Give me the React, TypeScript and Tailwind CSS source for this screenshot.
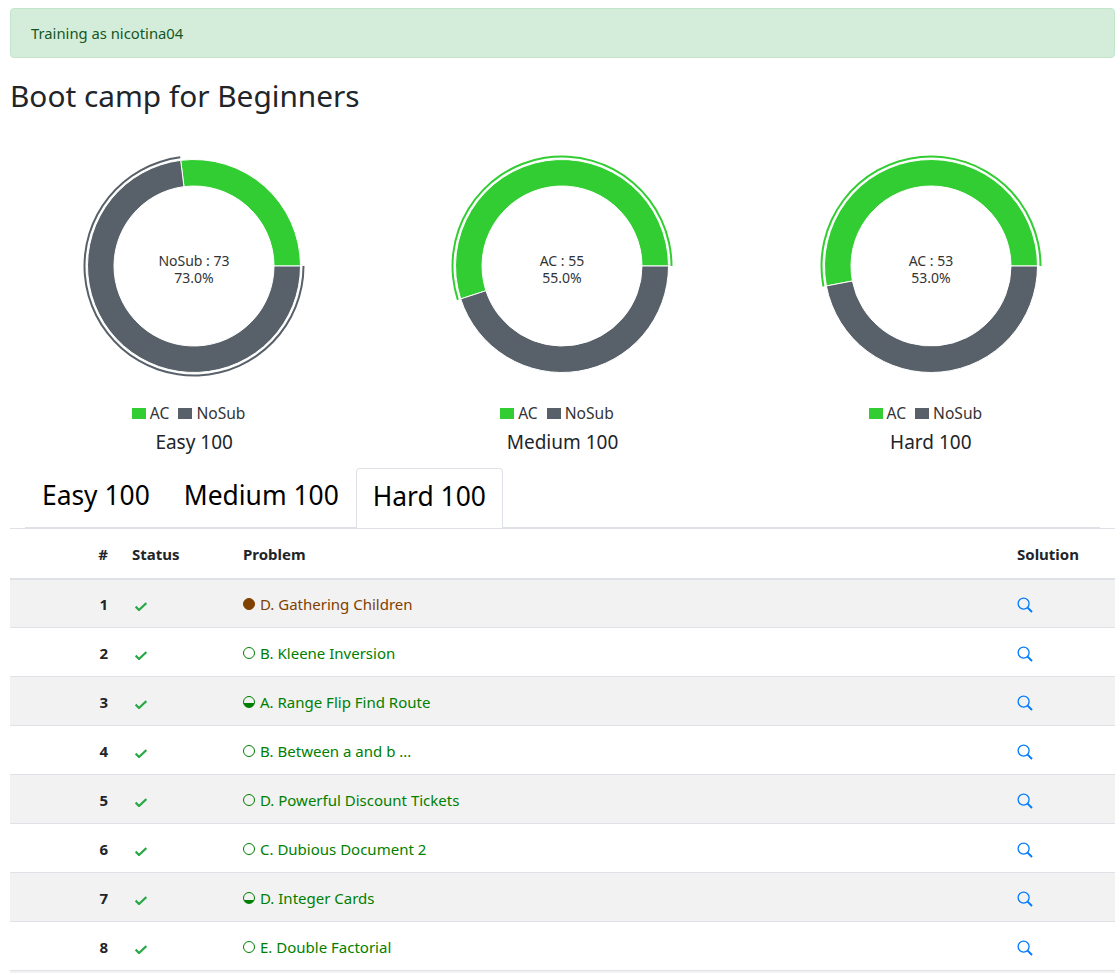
const GREEN = '#32cd32';
const GRAY = '#58616a';

interface ChartProps {
    title: string;
    ac: number;
    activeLabel: string;
    activeValue: number;
}

const charts: ChartProps[] = [
    { title: 'Easy 100', ac: 27, activeLabel: 'NoSub', activeValue: 73 },
    { title: 'Medium 100', ac: 55, activeLabel: 'AC', activeValue: 55 },
    { title: 'Hard 100', ac: 53, activeLabel: 'AC', activeValue: 53 },
];

const problems = [
    { no: 1, name: 'D. Gathering Children', color: '#804000', fill: 100 },
    { no: 2, name: 'B. Kleene Inversion', color: '#008000', fill: 0 },
    { no: 3, name: 'A. Range Flip Find Route', color: '#008000', fill: 40 },
    { no: 4, name: 'B. Between a and b ...', color: '#008000', fill: 0 },
    { no: 5, name: 'D. Powerful Discount Tickets', color: '#008000', fill: 0 },
    { no: 6, name: 'C. Dubious Document 2', color: '#008000', fill: 0 },
    { no: 7, name: 'D. Integer Cards', color: '#008000', fill: 30 },
    { no: 8, name: 'E. Double Factorial', color: '#008000', fill: 0 },
];

// percent runs counter-clockwise from 3 o'clock, as the chart starts at the right
const point = (r: number, pct: number) => {
    const a = (pct / 100) * 2 * Math.PI;
    return [125 + r * Math.cos(a), 125 - r * Math.sin(a)];
};

const sector = (inner: number, outer: number, from: number, to: number) => {
    const large = to - from > 50 ? 1 : 0;
    const [x1, y1] = point(outer, from);
    const [x2, y2] = point(outer, to);
    const [x3, y3] = point(inner, to);
    const [x4, y4] = point(inner, from);
    return `M${x1} ${y1}A${outer} ${outer} 0 ${large} 0 ${x2} ${y2}L${x3} ${y3}A${inner} ${inner} 0 ${large} 1 ${x4} ${y4}Z`;
};

function Donut({ title, ac, activeLabel, activeValue }: ChartProps) {
    const isAc = activeLabel === 'AC';
    const ringFrom = isAc ? 0 : ac;
    const ringTo = isAc ? ac : 100;
    return (
        <div className="flex-1 flex flex-col items-center">
            <svg width="250" height="250" viewBox="0 0 250 250" className="mt-[5px]">
                <path d={sector(80, 106.5, 0, ac)} fill={GREEN} stroke="#fff" />
                <path d={sector(80, 106.5, ac, 100)} fill={GRAY} stroke="#fff" />
                <path d={sector(108.5, 110.5, ringFrom, ringTo)} fill={isAc ? GREEN : GRAY} />
                <text x="125" y="125" textAnchor="middle" fontSize="14" fill="#333">
                    <tspan x="125" dy="0">{activeLabel} : {activeValue}</tspan>
                    <tspan x="125" dy="17">{activeValue.toFixed(1)}%</tspan>
                </text>
            </svg>
            <div className="flex items-center gap-[9px] text-[15.6px] leading-[20px] text-[#333] mt-[12px] mr-[11px]">
                <span className="flex items-center gap-[4px]">
                    <span className="w-[14px] h-[11px] bg-[#32cd32]" />AC
                </span>
                <span className="flex items-center gap-[4px]">
                    <span className="w-[14px] h-[11px] bg-[#58616a]" />NoSub
                </span>
            </div>
            <div className="text-[19px] leading-[27px] mt-[6px]">{title}</div>
        </div>
    );
}

function CheckIcon() {
    return (
        <svg width="12" height="9" viewBox="0 0 12 9" fill="none" stroke="#28a745" strokeWidth="2.2" className="block mt-[4px] ml-[3px]">
            <path d="M0.6 4.6L4 8L11.4 1" />
        </svg>
    );
}

function SearchIcon() {
    return (
        <svg width="16" height="16" viewBox="0 0 16 16" fill="none" stroke="#007bff" className="block mt-[2px]">
            <circle cx="6.6" cy="6.6" r="5.5" strokeWidth="1.3" />
            <path d="M10.6 10.6L15 15" strokeWidth="2" />
        </svg>
    );
}

export default function App() {
    return (
        <div className="h-screen overflow-hidden pl-[10px] pr-[3px] pt-[8px] bg-white text-[#212529] font-['Noto_Sans',sans-serif] text-[15px]">
            <div className="h-[50px] flex items-center px-[20px] pt-px rounded-[4px] border border-[#c3e6cb] bg-[#d4edda] text-[#155724] text-[14.8px]">
                Training as nicotina04
            </div>
            <h2 className="text-[29.8px] leading-[38px] mt-[19px]">Boot camp for Beginners</h2>

            <div className="flex mt-[21px]">
                {charts.map((c) => (
                    <Donut key={c.title} {...c} />
                ))}
            </div>

            <div className="flex mt-[12px] h-[60px] mx-[15px] border-b border-[#dee2e6] text-[26.4px] text-black">
                <div className="px-[17px] pb-[3px] flex items-center">Easy 100</div>
                <div className="px-[17px] pb-[3px] flex items-center">Medium 100</div>
                <div className="px-[16px] pb-[3px] flex items-center bg-white border border-b-0 border-[#dee2e6] rounded-t-[4px] -mb-px">
                    Hard 100
                </div>
            </div>

            <table className="w-full table-fixed border-collapse border-t border-[#dee2e6] text-[15px]">
                <colgroup>
                    <col className="w-[110px]" />
                    <col className="w-[111px]" />
                    <col />
                    <col className="w-[110px]" />
                </colgroup>
                <thead>
                    <tr className="h-[50px] border-b-2 border-[#dee2e6] font-bold">
                        <th className="pr-[12px] pt-px text-right">#</th>
                        <th className="px-[12px] pt-px text-left">Status</th>
                        <th className="px-[12px] pt-px text-left">Problem</th>
                        <th className="px-[12px] pt-px text-left">Solution</th>
                    </tr>
                </thead>
                <tbody>
                    {problems.map((p) => (
                        <tr key={p.no} className="h-[49px] border-t border-[#dee2e6] first:border-t-0 odd:bg-[#f2f2f2]">
                            <td className="pr-[12px] pt-[2px] text-right font-bold">{p.no}</td>
                            <td className="px-[12px] pt-[2px]">
                                <CheckIcon />
                            </td>
                            <td className="px-[12px] pt-[2px] whitespace-nowrap" style={{ color: p.color }}>
                                <span className="inline-flex items-center gap-[5px]">
                                    <span
                                        className="inline-block w-[12px] h-[12px] rounded-full border"
                                        style={{
                                            borderColor: p.color,
                                            background: `linear-gradient(to top, ${p.color} ${p.fill}%, transparent ${p.fill}%)`,
                                        }}
                                    />
                                    {p.name}
                                </span>
                            </td>
                            <td className="px-[12px] pt-[2px]">
                                <SearchIcon />
                            </td>
                        </tr>
                    ))}
                    <tr className="h-[49px] border-t border-[#dee2e6] bg-[#f2f2f2]">
                        <td colSpan={4} />
                    </tr>
                </tbody>
            </table>
        </div>
    );
}
